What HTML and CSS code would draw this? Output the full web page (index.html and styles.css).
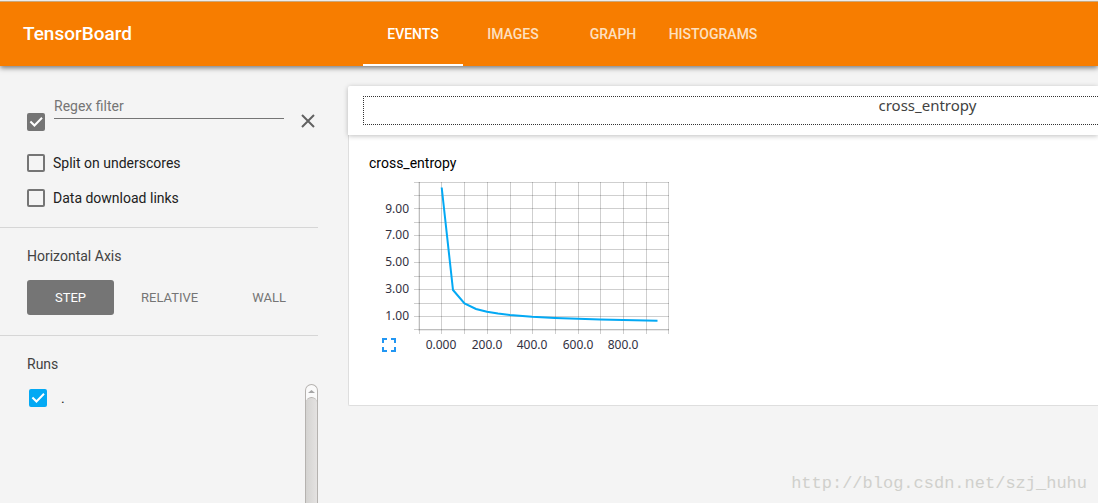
FILE: index.html
```html
<!DOCTYPE html>
<html lang="en">
<head>
<meta charset="utf-8">
<title>TensorBoard</title>
<link rel="stylesheet" href="styles.css">
</head>
<body>
<header class="toolbar">
  <h1 class="brand">TensorBoard</h1>
  <nav class="tabs">
    <a class="tab tab-active" href="#events">EVENTS</a>
    <a class="tab" href="#images">IMAGES</a>
    <a class="tab" href="#graph">GRAPH</a>
    <a class="tab" href="#histograms">HISTOGRAMS</a>
  </nav>
</header>
<div class="layout">
  <aside class="sidebar">
    <section class="section filters">
      <div class="filter-row">
        <input class="check check-on" type="checkbox" checked aria-label="Enable regex filter">
        <input class="regex" type="text" placeholder="Regex filter" aria-label="Regex filter">
        <button class="icon-button" type="button" aria-label="Remove filter">
          <svg width="20" height="20" viewBox="0 0 20 20"><path d="M4 4L16 16M16 4L4 16" fill="none" stroke="#616161" stroke-width="2"/></svg>
        </button>
      </div>
      <label class="option"><input class="check" type="checkbox"><span>Split on underscores</span></label>
      <label class="option"><input class="check" type="checkbox"><span>Data download links</span></label>
    </section>
    <section class="section">
      <h2 class="heading">Horizontal Axis</h2>
      <div class="axis">
        <button class="axis-button axis-selected" type="button">STEP</button>
        <button class="axis-button" type="button">RELATIVE</button>
        <button class="axis-button" type="button">WALL</button>
      </div>
    </section>
    <section class="section runs">
      <h2 class="heading">Runs</h2>
      <div class="run-list">
        <label class="run"><input class="check check-run" type="checkbox" checked><span>.</span></label>
        <div class="scrollbar">
          <svg class="scroll-up" width="11" height="12" viewBox="0 0 11 12"><path d="M2 8L5.500 5L9 8Z" fill="#a5a5a5"/></svg>
          <div class="scroll-thumb"></div>
        </div>
      </div>
    </section>
  </aside>
  <main class="content">
    <div class="pane-header"><button class="pane-title" type="button">cross_entropy</button></div>
    <div class="pane-body">
      <h3 class="chart-title">cross_entropy</h3>
      <div class="chart">
        <svg class="plot" width="304" height="180" viewBox="369 175 304 180" role="img" aria-label="cross_entropy by step">
          <path class="grid-lines" d="M419.500 182V334M441.500 182V334M464.500 182V334M487.500 182V334M510.500 182V334M532.500 182V334M555.500 182V334M578.500 182V334M600.500 182V334M623.500 182V334M646.500 182V334M668.500 182V334"/>
          <path class="grid-lines" d="M414 182.500H669M414 195.500H669M414 208.500H669M414 222.500H669M414 235.500H669M414 249.500H669M414 262.500H669M414 276.500H669M414 289.500H669M414 303.500H669M414 316.500H669M414 329.500H669"/>
          <path class="axis-line" d="M419 182V330H669"/>
          <polyline class="series" points="441.700,187.500 453,290 464.500,303.500 476,309 487,311.800 498,313.600 510,314.900 532,316.700 555,318 578,318.800 600,319.400 623,320 657.500,320.700"/>
          <g class="labels" text-anchor="end">
            <text x="409" y="213">9.00</text><text x="409" y="239">7.00</text><text x="409" y="266">5.00</text><text x="409" y="293">3.00</text><text x="409" y="320">1.00</text>
          </g>
          <g class="labels" text-anchor="middle">
            <text x="441" y="349">0.000</text><text x="487" y="349">200.0</text><text x="532" y="349">400.0</text><text x="578" y="349">600.0</text><text x="623" y="349">800.0</text>
          </g>
        </svg>
        <button class="expand" type="button" aria-label="Expand chart">
          <svg width="14" height="14" viewBox="0 0 14 14"><path d="M1 5V1H5M9 1H13V5M13 9V13H9M5 13H1V9" fill="none" stroke="#2196f3" stroke-width="2"/></svg>
        </button>
      </div>
    </div>
    <p class="watermark">http://blog.csdn.net/szj_huhu</p>
  </main>
</div>
</body>
</html>
```
FILE: styles.css
```css
* { box-sizing: border-box; }
body {
  margin: 0;
  min-height: 100vh;
  display: flex;
  flex-direction: column;
  background: #f4f4f4;
  font-family: Roboto, sans-serif;
  font-size: 14px;
  line-height: 20px;
  color: #212121;
}
h1, h2, h3, p { margin: 0; font-weight: 400; }
button { border: 0; padding: 0; background: none; font: inherit; cursor: pointer; }
svg { display: block; }

.toolbar {
  position: relative;
  display: flex;
  height: 66px;
  border-top: 1px solid #ececec;
  background: #f77d00;
  box-shadow: 0 2px 5px rgba(0, 0, 0, .5), inset 0 1px 0 #c9a87c;
}
.brand {
  width: 363px;
  padding-left: 23px;
  line-height: 66px;
  font-size: 19px;
  font-weight: 500;
  color: #fff;
}
.tabs { display: flex; }
.tab {
  width: 100px;
  border-bottom: 2px solid transparent;
  line-height: 66px;
  font-weight: 500;
  text-align: center;
  text-decoration: none;
  color: #fde0c0;
}
.tab-active { color: #fff; border-color: #fff; }

.layout { flex: 1; display: flex; gap: 30px; }
.sidebar { width: 318px; flex: none; display: flex; flex-direction: column; }
.section { padding: 18px 0 20px 27px; border-bottom: 1px solid #d6d6d6; }
.filters { display: flex; flex-direction: column; padding: 30px 0 12px 27px; }
.filter-row { display: flex; align-items: flex-end; height: 35px; margin-bottom: 14px; }
.regex {
  flex: 1;
  min-width: 0;
  align-self: flex-start;
  height: 23px;
  margin: 0 14px 0 9px;
  padding: 0 0 2px;
  border: 0;
  border-bottom: 1px solid #757575;
  border-radius: 0;
  background: none;
  font: inherit;
}
.regex::placeholder { color: #757575; opacity: 1; }
.option { display: flex; align-items: center; gap: 8px; height: 35px; }
.check {
  appearance: none;
  flex: none;
  width: 18px;
  height: 18px;
  margin: 0;
  border: 2px solid #757575;
  border-radius: 2px;
}
.check:checked { background: #757575; }
.check:checked::before {
  content: "";
  display: block;
  width: 14px;
  height: 14px;
  background: #fff;
  clip-path: polygon(5% 51%, 15% 41%, 39% 65%, 88% 15%, 98% 25%, 39% 85%);
}
.check-run:checked { border-color: #03a9f4; background: #03a9f4; }

.heading { font-size: 14px; color: #424242; }
.axis { display: flex; margin-top: 14px; }
.axis-button {
  height: 35px;
  padding: 0 28px;
  border-radius: 3px;
  font-size: 13px;
  color: #757575;
}
.axis-button + .axis-button { padding: 0 27px; }
.axis-selected { background: #757575; color: #fff; }

.runs { flex: 1; display: flex; flex-direction: column; padding-bottom: 0; border: 0; }
.run-list { flex: 1; display: flex; justify-content: space-between; margin-top: 10px; }
.run { display: flex; align-items: center; gap: 14px; height: 28px; padding-left: 2px; }
.scrollbar {
  display: flex;
  flex-direction: column;
  width: 13px;
  border: 1px solid #b5b2af;
  border-bottom: 0;
  border-radius: 7px 7px 0 0;
  background: #fafafa;
}
.scroll-thumb {
  flex: 1;
  border-top: 1px solid #b5b2af;
  border-radius: 6px 6px 0 0;
  background: linear-gradient(90deg, #d4d3d1, #e4e2e1);
}

.content { flex: 1; min-width: 0; display: flex; flex-direction: column; padding-top: 20px; }
.pane-header {
  position: relative;
  padding: 10px 0 10px 15px;
  background: #fff;
  border-radius: 2px 0 0 0;
  box-shadow: 0 1px 5px rgba(0, 0, 0, .25);
}
.pane-title {
  display: block;
  width: 100%;
  height: 29px;
  padding: 0 0 11px 70%;
  border: 1px dotted #333;
  border-right: 0;
  font-family: "Noto Sans", sans-serif;
  font-size: 15px;
  line-height: 16px;
  text-align: left;
  color: #424242;
}
.pane-body {
  padding: 18px 20px 50px;
  border: 1px solid #dedede;
  border-top: 0;
  border-right: 0;
  border-radius: 0 0 0 2px;
  background: #fff;
}
.chart-title { font-size: 14px; color: #000; }
.chart { display: grid; justify-content: start; }
.plot { grid-area: 1 / 1; margin-top: 2px; }
.expand { grid-area: 1 / 1; align-self: end; justify-self: start; margin: 0 0 3px 13px; }
.grid-lines { fill: none; stroke: rgba(0, 0, 0, .19); }
.axis-line { fill: none; stroke: rgba(0, 0, 0, .08); stroke-width: 2; }
.series { fill: none; stroke: #03a9f4; stroke-width: 2; }
.labels { font-family: "Noto Sans", sans-serif; font-size: 12px; fill: #32313f; }
.watermark {
  margin-top: auto;
  padding: 0 11px 9px 0;
  font-family: "Liberation Mono", monospace;
  font-size: 17px;
  text-align: right;
  color: #d0d0cc;
}
```
